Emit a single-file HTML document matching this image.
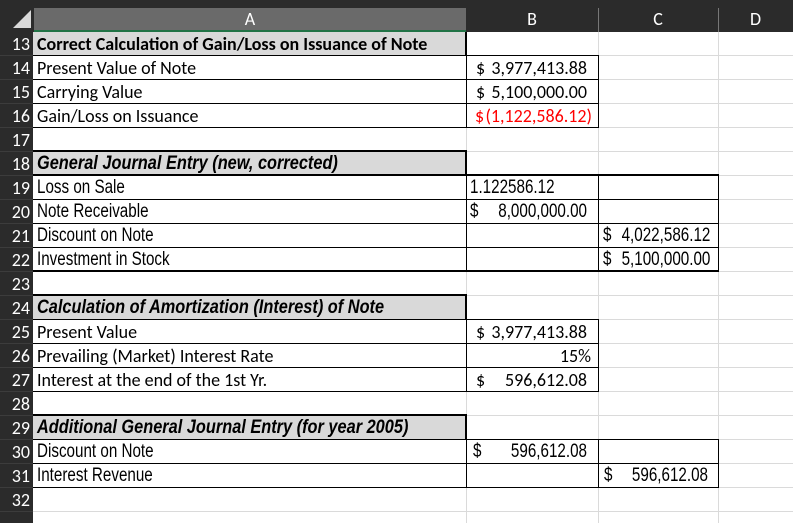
<!DOCTYPE html>
<html><head><meta charset="utf-8"><style>
*{margin:0;padding:0;box-sizing:border-box}
html,body{width:793px;height:523px;overflow:hidden}
body{background:#fff;position:relative;font-family:"Carlito","Liberation Sans",sans-serif;font-size:18px;color:#000}
.a{position:absolute}
.rn{position:absolute;left:0;width:33px;height:24px;background:#2b2b2b;color:#fff;text-align:right;padding-right:3px;line-height:24px;font-size:18px;border-bottom:1px solid #3c3c3c}
.h{position:absolute;height:1px;background:#dadada}
.v{position:absolute;width:1px;background:#dadada}
.bh{position:absolute;height:1px;background:#000}
.bv{position:absolute;width:1px;background:#000}
.t{position:absolute;line-height:24px;white-space:nowrap}
.n{font-family:"Liberation Sans",sans-serif;font-size:19px;transform:scaleX(.8);transform-origin:left center}
.nb{font-family:"Liberation Sans",sans-serif;font-size:19px;transform:scaleX(.86);transform-origin:left center;font-weight:bold;font-style:italic}
.nr{font-family:"Liberation Sans",sans-serif;font-size:19px;transform:scaleX(.8);transform-origin:right center;text-align:right}
.hd{position:absolute;left:33px;width:433px;height:24px;background:#d9d9d9}
.r{text-align:right}
</style></head><body>
<div class="a" style="left:0;top:0;width:793px;height:32px;background:#2b2b2b"></div>
<div class="a" style="left:34px;top:8px;width:432px;height:22px;background:#6a6a6a"></div>
<div class="a" style="left:34px;top:30px;width:432px;height:2px;background:#217346"></div>
<svg class="a" style="left:12px;top:9px" width="20" height="20"><polygon points="19,1 19,19 1,19" fill="#d9d9d9"/></svg>
<div class="a" style="left:598px;top:8px;width:1px;height:24px;background:#777"></div>
<div class="a" style="left:718px;top:8px;width:1px;height:24px;background:#777"></div>
<div class="t" style="left:34px;top:7px;width:432px;text-align:center;color:#fff">A</div>
<div class="t" style="left:466px;top:7px;width:132px;text-align:center;color:#fff">B</div>
<div class="t" style="left:598px;top:7px;width:120px;text-align:center;color:#fff">C</div>
<div class="t" style="left:718px;top:7px;width:75px;text-align:center;color:#fff">D</div>
<div class="rn" style="top:32px">13</div><div class="rn" style="top:56px">14</div><div class="rn" style="top:80px">15</div><div class="rn" style="top:104px">16</div><div class="rn" style="top:128px">17</div><div class="rn" style="top:152px">18</div><div class="rn" style="top:176px">19</div><div class="rn" style="top:200px">20</div><div class="rn" style="top:224px">21</div><div class="rn" style="top:248px">22</div><div class="rn" style="top:272px">23</div><div class="rn" style="top:296px">24</div><div class="rn" style="top:320px">25</div><div class="rn" style="top:344px">26</div><div class="rn" style="top:368px">27</div><div class="rn" style="top:392px">28</div><div class="rn" style="top:416px">29</div><div class="rn" style="top:440px">30</div><div class="rn" style="top:464px">31</div><div class="rn" style="top:488px">32</div><div class="rn" style="top:512px"></div>
<div class="h" style="left:33px;width:760px;top:55px"></div><div class="h" style="left:33px;width:760px;top:79px"></div><div class="h" style="left:33px;width:760px;top:103px"></div><div class="h" style="left:33px;width:760px;top:127px"></div><div class="h" style="left:33px;width:760px;top:151px"></div><div class="h" style="left:33px;width:760px;top:175px"></div><div class="h" style="left:33px;width:760px;top:199px"></div><div class="h" style="left:33px;width:760px;top:223px"></div><div class="h" style="left:33px;width:760px;top:247px"></div><div class="h" style="left:33px;width:760px;top:271px"></div><div class="h" style="left:33px;width:760px;top:295px"></div><div class="h" style="left:33px;width:760px;top:319px"></div><div class="h" style="left:33px;width:760px;top:343px"></div><div class="h" style="left:33px;width:760px;top:367px"></div><div class="h" style="left:33px;width:760px;top:391px"></div><div class="h" style="left:33px;width:760px;top:415px"></div><div class="h" style="left:33px;width:760px;top:439px"></div><div class="h" style="left:33px;width:760px;top:463px"></div><div class="h" style="left:33px;width:760px;top:487px"></div><div class="h" style="left:33px;width:760px;top:511px"></div>
<div class="v" style="left:466px;top:32px;height:491px"></div><div class="v" style="left:598px;top:32px;height:491px"></div><div class="v" style="left:718px;top:32px;height:491px"></div>
<div class="hd" style="top:32px;height:23px"></div>
<div class="hd" style="top:152px;height:23px"></div>
<div class="hd" style="top:296px;height:23px"></div>
<div class="hd" style="top:416px;height:23px"></div>
<div class="bh" style="left:33px;width:566px;top:55px"></div><div class="bh" style="left:33px;width:566px;top:79px"></div><div class="bh" style="left:33px;width:566px;top:103px"></div><div class="bh" style="left:33px;width:566px;top:127px"></div>
<div class="bv" style="left:465px;top:32px;height:24px;width:2px"></div><div class="bv" style="left:466px;top:55px;height:73px"></div><div class="bv" style="left:598px;top:55px;height:73px"></div>
<div class="bh" style="left:33px;width:434px;top:150px;height:2px"></div>
<div class="bv" style="left:465px;top:150px;height:26px;width:2px"></div>
<div class="bh" style="left:33px;width:686px;top:174px;height:2px"></div>
<div class="bh" style="left:33px;width:686px;top:199px"></div><div class="bh" style="left:33px;width:686px;top:223px"></div><div class="bh" style="left:33px;width:686px;top:247px"></div>
<div class="bh" style="left:33px;width:686px;top:270px;height:2px"></div>
<div class="bv" style="left:466px;top:175px;height:97px"></div><div class="bv" style="left:598px;top:175px;height:97px"></div><div class="bv" style="left:718px;top:175px;height:97px"></div>
<div class="bh" style="left:33px;width:434px;top:294px;height:2px"></div>
<div class="bv" style="left:465px;top:294px;height:26px;width:2px"></div>
<div class="bh" style="left:33px;width:566px;top:319px"></div><div class="bh" style="left:33px;width:566px;top:343px"></div><div class="bh" style="left:33px;width:566px;top:367px"></div><div class="bh" style="left:33px;width:566px;top:391px"></div>
<div class="bv" style="left:466px;top:319px;height:73px"></div><div class="bv" style="left:598px;top:319px;height:73px"></div>
<div class="bh" style="left:33px;width:434px;top:414px;height:2px"></div>
<div class="bv" style="left:465px;top:414px;height:26px;width:2px"></div>
<div class="bh" style="left:33px;width:686px;top:439px"></div><div class="bh" style="left:33px;width:686px;top:463px"></div><div class="bh" style="left:33px;width:686px;top:487px"></div>
<div class="bv" style="left:466px;top:439px;height:49px"></div><div class="bv" style="left:598px;top:439px;height:49px"></div><div class="bv" style="left:718px;top:439px;height:49px"></div>
<div class="t" style="left:37px;top:32px;font-weight:bold">Correct Calculation of Gain/Loss on Issuance of Note</div>
<div class="t" style="left:37px;top:56px">Present Value of Note</div>
<div class="t" style="left:37px;top:80px">Carrying Value</div>
<div class="t" style="left:37px;top:104px">Gain/Loss on Issuance</div>
<div class="t" style="left:476px;top:56px">$</div><div class="t r" style="left:480px;width:107px;top:56px">3,977,413.88</div>
<div class="t" style="left:476px;top:80px">$</div><div class="t r" style="left:480px;width:107px;top:80px">5,100,000.00</div>
<div class="t" style="left:475px;top:104px;color:#f00">$</div><div class="t r" style="left:480px;width:112px;top:104px;color:#f00">(1,122,586.12)</div>
<div class="t nb" style="left:37px;top:152px">General Journal Entry (new, corrected)</div>
<div class="t n" style="left:37px;top:176px">Loss on Sale</div>
<div class="t n" style="left:37px;top:200px">Note Receivable</div>
<div class="t n" style="left:37px;top:224px">Discount on Note</div>
<div class="t n" style="left:37px;top:248px">Investment in Stock</div>
<div class="t n" style="left:470px;top:176px">1.122586.12</div>
<div class="t n" style="left:470px;top:200px">$</div><div class="t nr" style="left:470px;width:117px;top:200px">8,000,000.00</div>
<div class="t n" style="left:603px;top:224px">$</div><div class="t nr" style="left:600px;width:108px;top:224px">4,022,586.12</div>
<div class="t n" style="left:603px;top:248px">$</div><div class="t nr" style="left:600px;width:108px;top:248px">5,100,000.00</div>
<div class="t nb" style="left:37px;top:296px">Calculation of Amortization (Interest) of Note</div>
<div class="t" style="left:37px;top:320px">Present Value</div>
<div class="t" style="left:37px;top:344px">Prevailing (Market) Interest Rate</div>
<div class="t" style="left:37px;top:368px">Interest at the end of the 1st Yr.</div>
<div class="t" style="left:476px;top:320px">$</div><div class="t r" style="left:480px;width:107px;top:320px">3,977,413.88</div>
<div class="t r" style="left:480px;width:111px;top:344px">15%</div>
<div class="t" style="left:476px;top:368px">$</div><div class="t r" style="left:480px;width:107px;top:368px">596,612.08</div>
<div class="t nb" style="left:37px;top:416px">Additional General Journal Entry (for year 2005)</div>
<div class="t n" style="left:37px;top:440px">Discount on Note</div>
<div class="t n" style="left:37px;top:464px">Interest Revenue</div>
<div class="t n" style="left:473px;top:440px">$</div><div class="t nr" style="left:470px;width:117px;top:440px">596,612.08</div>
<div class="t n" style="left:604px;top:464px">$</div><div class="t nr" style="left:600px;width:108px;top:464px">596,612.08</div>
</body></html>
